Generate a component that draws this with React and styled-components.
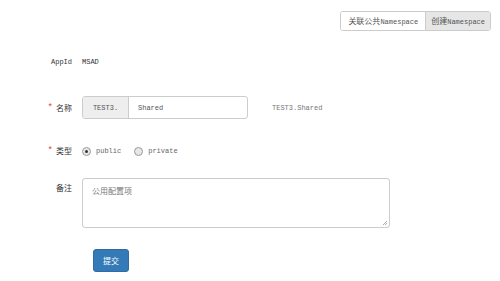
import React from 'react';
import styled, { createGlobalStyle } from 'styled-components';

const GlobalStyle = createGlobalStyle`
  html, body {
    margin: 0;
    padding: 0;
    background: #fff;
  }
  body {
    font-family: "Liberation Mono", "Noto Sans CJK SC", monospace;
    font-size: 7px;
    color: #333;
  }
`;

const Page = styled.div`
  width: 500px;
  height: 281px;
  overflow: hidden;
`;

// CJK glyphs render a touch larger than the latin ones in the original
const Zh = styled.span`
  font-family: "Noto Sans CJK SC", sans-serif;
  font-size: 8px;
`;

const Header = styled.div`
  display: flex;
  justify-content: flex-end;
  padding: 11px 9px 0 0;
`;

const BtnGroup = styled.div`
  display: flex;
  border: 1px solid #ccc;
  border-radius: 3px;
  overflow: hidden;
`;

const GroupBtn = styled.div`
  height: 18px;
  line-height: 18px;
  padding: 0 ${(p) => (p.$active ? '5px' : '7px')};
  color: #555;
  background: ${(p) => (p.$active ? '#e6e6e6' : '#fff')};
  border-left: ${(p) => (p.$active ? '1px solid #ccc' : 'none')};
`;

const Row = styled.div`
  display: grid;
  grid-template-columns: 72px 1fr;
  column-gap: 10px;
  align-items: ${(p) => (p.$top ? 'start' : 'center')};
  margin-top: ${(p) => p.$mt}px;
`;

const Label = styled.div`
  display: flex;
  justify-content: flex-end;
  align-items: center;
  gap: 3px;
  line-height: 14px;
  padding-top: ${(p) => (p.$top ? '3px' : '0')};
  color: #333;
`;

const Star = styled.span`
  color: #e33;
  font-size: 9px;
`;

const Value = styled.div`
  line-height: 14px;
`;

const Line = styled.div`
  display: flex;
  align-items: center;
`;

const InputGroup = styled.div`
  display: flex;
  width: 166px;
  height: 23px;
  box-sizing: border-box;
  border: 1px solid #ccc;
  border-radius: 3px;
  overflow: hidden;
`;

const Addon = styled.div`
  width: 45px;
  display: flex;
  align-items: center;
  justify-content: center;
  background: #eee;
  border-right: 1px solid #ccc;
  color: #555;
`;

const TextInput = styled.div`
  flex: 1;
  display: flex;
  align-items: center;
  padding-left: 9px;
  color: #555;
`;

const Hint = styled.span`
  margin-left: 24px;
  color: #777;
`;

const RadioItem = styled.label`
  display: flex;
  align-items: center;
  gap: 5px;
  margin-right: 13px;
  color: #666;
  line-height: 14px;
`;

const RadioDot = styled.span`
  width: 7px;
  height: 7px;
  border-radius: 50%;
  border: 1px solid #999;
  background: #e8e8e8;
  display: flex;
  align-items: center;
  justify-content: center;
  &::after {
    content: '';
    width: 3px;
    height: 3px;
    border-radius: 50%;
    background: ${(p) => (p.$checked ? '#333' : 'transparent')};
  }
`;

const TextArea = styled.div`
  position: relative;
  width: 308px;
  height: 50px;
  box-sizing: border-box;
  border: 1px solid #ccc;
  border-radius: 3px;
  padding: 5px 9px;
  color: #777;
  line-height: 14px;
`;

const Grip = styled.svg`
  position: absolute;
  right: 1px;
  bottom: 1px;
`;

const Submit = styled.div`
  margin: 21px 0 0 93px;
  width: 36px;
  height: 23px;
  box-sizing: border-box;
  border: 1px solid #2e6da4;
  border-radius: 3px;
  background: #337ab7;
  color: #fff;
  display: flex;
  align-items: center;
  justify-content: center;
`;

export default function App() {
  return (
    <Page>
      <GlobalStyle />
      <Header>
        <BtnGroup>
          <GroupBtn>
            <Zh>关联公共</Zh>Namespace
          </GroupBtn>
          <GroupBtn $active>
            <Zh>创建</Zh>Namespace
          </GroupBtn>
        </BtnGroup>
      </Header>

      <Row $mt={24}>
        <Label>AppId</Label>
        <Value>MSAD</Value>
      </Row>

      <Row $mt={27}>
        <Label>
          <Star>*</Star>
          <Zh>名称</Zh>
        </Label>
        <Line>
          <InputGroup>
            <Addon>TEST3.</Addon>
            <TextInput>Shared</TextInput>
          </InputGroup>
          <Hint>TEST3.Shared</Hint>
        </Line>
      </Row>

      <Row $mt={25}>
        <Label>
          <Star>*</Star>
          <Zh>类型</Zh>
        </Label>
        <Line>
          <RadioItem>
            <RadioDot $checked />
            public
          </RadioItem>
          <RadioItem>
            <RadioDot />
            private
          </RadioItem>
        </Line>
      </Row>

      <Row $mt={20} $top>
        <Label $top>
          <Zh>备注</Zh>
        </Label>
        <TextArea>
          <Zh>公用配置项</Zh>
          <Grip width="6" height="6" viewBox="0 0 6 6">
            <path d="M5 1L1 5M5 3L3 5" stroke="#999" strokeWidth="0.8" />
          </Grip>
        </TextArea>
      </Row>

      <Submit>
        <Zh>提交</Zh>
      </Submit>
    </Page>
  );
}
